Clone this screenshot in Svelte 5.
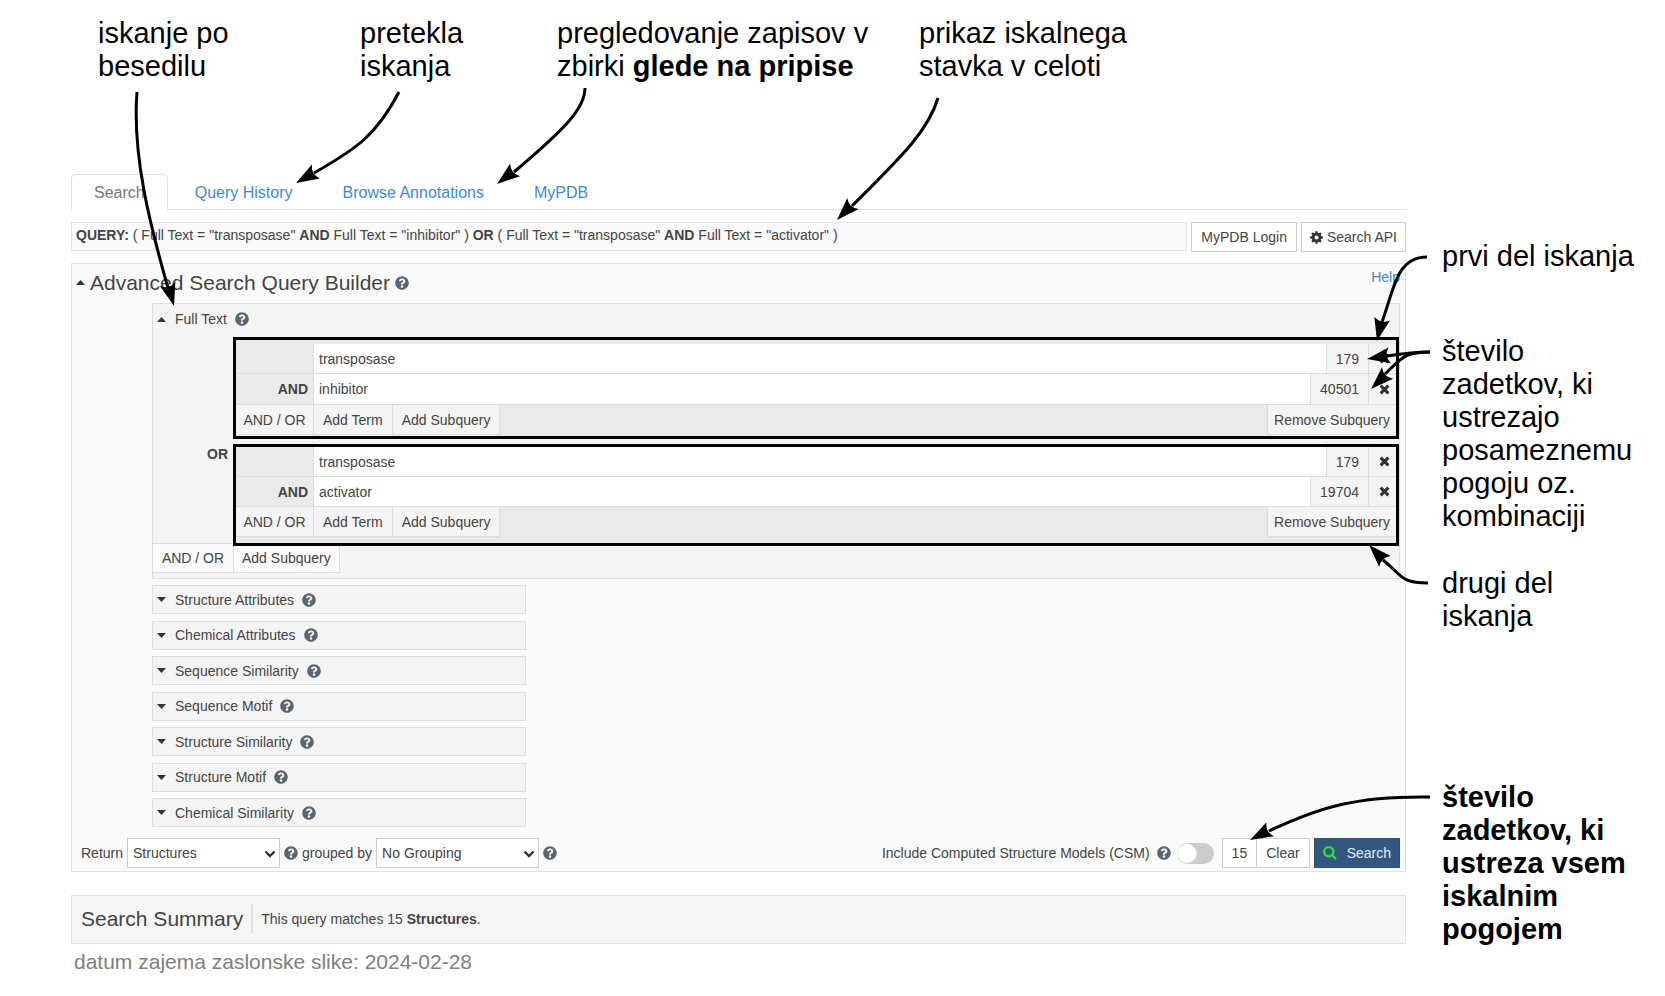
<script>
  const tabs = ['Query History', 'Browse Annotations', 'MyPDB'];
  const groups = [
    { id: 'first', terms: [{ value: 'transposase', count: 179 }, { value: 'inhibitor', count: 40501 }] },
    { id: 'second', terms: [{ value: 'transposase', count: 179 }, { value: 'activator', count: 19704 }] }
  ];
  const sections = [
    'Structure Attributes', 'Chemical Attributes', 'Sequence Similarity', 'Sequence Motif',
    'Structure Similarity', 'Structure Motif', 'Chemical Similarity'
  ];
  const arrows = [
    { line: 'M137 92C132 155 150 225 168 288', x: 174, y: 306, angle: 74 },
    { line: 'M399 92C376 136 356 149 314 173', x: 296, y: 183, angle: 150 },
    { line: 'M585 88C585 108 566 128 514 172', x: 497, y: 184, angle: 142 },
    { line: 'M938 98C928 132 898 160 852 206', x: 837, y: 220, angle: 134 },
    { line: 'M1427 257C1396 257 1394 290 1382 322', x: 1377, y: 341, angle: 103 },
    { line: 'M1430 352C1415 352 1400 354 1387 356', x: 1367, y: 359, angle: 171 },
    { line: 'M1430 352C1404 352 1402 358 1385 374', x: 1371, y: 389, angle: 136 },
    { line: 'M1428 583C1400 583 1402 575 1383 560', x: 1369, y: 545, angle: 226 },
    { line: 'M1430 797C1358 796 1322 806 1269 831', x: 1250, y: 840, angle: 152 }
  ];
</script>

{#snippet help()}
  <svg class="help" viewBox="0 0 512 512" aria-hidden="true"><path d="M504 256c0 136.997-111.043 248-248 248S8 392.997 8 256C8 119.083 119.043 8 256 8s248 111.083 248 248zM262.655 90c-54.497 0-89.255 22.957-116.549 63.758-3.536 5.286-2.353 12.415 2.715 16.258l34.699 26.31c5.205 3.947 12.621 3.008 16.665-2.122 17.864-22.658 30.113-35.797 57.303-35.797 20.429 0 45.698 13.148 45.698 32.958 0 14.976-12.363 22.667-32.534 33.976C247.128 238.528 216 254.941 216 296v4c0 6.627 5.373 12 12 12h56c6.627 0 12-5.373 12-12v-1.333c0-28.462 83.186-29.647 83.186-106.667 0-58.002-60.165-102-116.531-102zM256 338c-25.365 0-46 20.635-46 46 0 25.364 20.635 46 46 46s46-20.636 46-46c0-25.364-20.635-46-46-46z" /></svg>
{/snippet}

{#snippet caret(up)}
  <svg class="caret" viewBox="0 0 9 5" aria-hidden="true"><path d={up ? 'M0 5L4.5 0L9 5Z' : 'M0 0L4.5 5L9 0Z'} /></svg>
{/snippet}

{#snippet chevron()}
  <svg class="chevron" viewBox="0 0 12 8" aria-hidden="true"><path d="M1.5 1.5L6 6L10.5 1.5" /></svg>
{/snippet}

<div class="page">
  <header class="notes-top">
    <p>iskanje po<br />besedilu</p>
    <p>pretekla<br />iskanja</p>
    <p>pregledovanje zapisov v<br />zbirki <b>glede na pripise</b></p>
    <p>prikaz iskalnega<br />stavka v celoti</p>
  </header>

  <div class="columns">
    <main>
      <nav class="tabs">
        <a class="tab active" href="#search">Search</a>
        {#each tabs as tab}
          <a class="tab" href="#tab">{tab}</a>
        {/each}
      </nav>

      <div class="query-row">
        <div class="query"><b>QUERY:</b> ( Full Text = "transposase" <b>AND</b> Full Text = "inhibitor" ) <b>OR</b> ( Full Text = "transposase" <b>AND</b> Full Text = "activator" )</div>
        <button class="plain">MyPDB Login</button>
        <button class="plain api">
          <svg class="gear" viewBox="0 0 14 14" aria-hidden="true">
            <circle cx="7" cy="7" r="3.7" fill="none" stroke="#333" stroke-width="3" />
            <path d="M7 .2V3M7 11v2.8M.2 7H3M11 7h2.8M2.2 2.2l2 2M9.8 9.8l2 2M11.8 2.2l-2 2M4.2 9.8l-2 2" stroke="#333" stroke-width="2.5" />
          </svg>
          Search API
        </button>
      </div>

      <section class="builder">
        <div class="title-row">
          <button class="title">{@render caret(true)}<span>Advanced Search Query Builder</span>{@render help()}</button>
          <a class="help-link" href="#help">Help</a>
        </div>

        <div class="attributes">
          <div class="fulltext">
            <button class="toggle-head">{@render caret(true)}<span>Full Text</span>{@render help()}</button>
            <div class="groups">
              {#each groups as group, g}
                <b class="joiner">{g ? 'OR' : ''}</b>
                <div class="group {group.id}">
                  {#each group.terms as term, t}
                    <div class="term">
                      <b>{t ? 'AND' : ''}</b>
                      <input type="text" value={term.value} aria-label="Full Text" />
                      <span class="count">{term.count}</span>
                      <button class="remove" aria-label="Remove term">
                        <svg viewBox="0 0 12 12" aria-hidden="true"><path d="M1.8 1.8L10.2 10.2M10.2 1.8L1.8 10.2" /></svg>
                      </button>
                    </div>
                  {/each}
                  <div class="actions">
                    <button class="logic">AND / OR</button>
                    <button>Add Term</button>
                    <button>Add Subquery</button>
                    <button class="last">Remove Subquery</button>
                  </div>
                </div>
              {/each}
            </div>
            <div class="actions outer">
              <button class="logic">AND / OR</button>
              <button>Add Subquery</button>
            </div>
          </div>

          <div class="sections">
            {#each sections as name}
              <button class="toggle-head closed">{@render caret(false)}<span>{name}</span>{@render help()}</button>
            {/each}
          </div>
        </div>

        <div class="run-row">
          <label for="return">Return</label>
          <span class="select"><select id="return"><option>Structures</option></select>{@render chevron()}</span>
          {@render help()}
          <label for="grouping">grouped by</label>
          <span class="select wide"><select id="grouping"><option>No Grouping</option></select>{@render chevron()}</span>
          {@render help()}
          <label class="csm" for="csm">Include Computed Structure Models (CSM)</label>
          {@render help()}
          <input id="csm" class="switch" type="checkbox" />
          <div class="pair">
            <button class="plain">15</button>
            <button class="plain">Clear</button>
          </div>
          <button class="go">
            <svg viewBox="0 0 14 14" aria-hidden="true"><circle cx="5.8" cy="5.8" r="4.6" /><path d="M9.2 9.2L13 13" /></svg>
            Search
          </button>
        </div>
      </section>

      <section class="summary">
        <h2>Search Summary</h2>
        <p>This query matches 15 <b>Structures</b>.</p>
      </section>
      <p class="caption">datum zajema zaslonske slike: 2024-02-28</p>
    </main>

    <aside class="notes-side">
      <p class="part-one">prvi del iskanja</p>
      <p class="hits">število<br />zadetkov, ki<br />ustrezajo<br />posameznemu<br />pogoju oz.<br />kombinaciji</p>
      <p class="part-two">drugi del<br />iskanja</p>
      <p><b>število<br />zadetkov, ki<br />ustreza vsem<br />iskalnim<br />pogojem</b></p>
    </aside>
  </div>

  <svg class="arrows" viewBox="0 0 1665 996" preserveAspectRatio="none" aria-hidden="true">
    {#each arrows as a}
      <path class="line" d={a.line} />
      <path class="head" d="M0 0L-23 -8Q-17 0 -23 8Z" transform="translate({a.x} {a.y}) rotate({a.angle})" />
    {/each}
  </svg>
</div>

<style>
  :global(body) { background: #fff; }
  .page, .page * { box-sizing: border-box; }
  .page {
    position: relative;
    padding-top: 17px;
    font: 14px/20px "Liberation Sans", Arial, sans-serif;
    color: #444;
  }
  p, h2 { margin: 0; }
  button, input, select { font: inherit; color: inherit; margin: 0; }
  button { cursor: pointer; white-space: nowrap; }
  a { color: #428bca; text-decoration: none; }

  .notes-top, .notes-side { font-size: 29px; line-height: 33px; color: #000; }
  .notes-top {
    display: grid;
    grid-template-columns: 262px 197px 362px 1fr;
    padding-left: 98px;
    height: 157px;
    white-space: nowrap;
  }
  .columns {
    display: grid;
    grid-template-columns: 1fr 224px;
    column-gap: 35px;
    padding-left: 71px;
  }
  main { min-width: 0; padding-bottom: 22px; }
  .notes-side { padding: 66px 0 0 1px; white-space: nowrap; }
  .part-one { margin-bottom: 62px; }
  .hits { margin-bottom: 34px; }
  .part-two { margin-bottom: 148px; }

  .tabs {
    display: flex;
    gap: 4px;
    height: 36px;
    border-bottom: 1px solid #e2e2e2;
    font-size: 16px;
  }
  .tab { height: 36px; padding: 8px 22px; border: 1px solid transparent; }
  .active {
    color: #777;
    background: #fff;
    border-color: #e0e0e0;
    border-bottom-color: #fff;
    border-radius: 5px 5px 0 0;
  }

  .query-row { display: flex; align-items: flex-start; margin: 12px 0; gap: 4px; height: 29px; }
  .query {
    flex: 1;
    height: 29px;
    padding: 2px 4px;
    border: 1px solid #e2e2e2;
    background: #fafafa;
    white-space: nowrap;
  }
  .plain { height: 30px; padding: 0 9px; border: 1px solid #ccc; background: #fff; }
  .api { display: flex; align-items: center; gap: 4px; padding: 0 8px; }
  .gear { width: 13px; height: 13px; }

  .builder { border: 1px solid #e0e0e0; background: #fafafa; padding-bottom: 3px; }
  .title-row { display: flex; justify-content: space-between; padding: 0 5px 0 4px; height: 39px; }
  .title {
    display: flex;
    align-items: center;
    gap: 5px;
    height: 37px;
    padding: 0;
    border: 0;
    background: none;
    font-size: 21px;
  }
  .help-link { padding-top: 3px; }
  .help { flex: none; width: 14px; height: 14px; fill: #5a6672; }
  .caret { flex: none; width: 9px; height: 5px; fill: #333; }

  .attributes { padding: 0 5px 0 80px; }
  .fulltext { border: 1px solid #ddd; background: #f4f4f4; padding-bottom: 5px; }
  .toggle-head { display: flex; align-items: center; border: 0; background: none; padding: 0 4px; height: 30px; }
  .toggle-head span { margin: 0 8px 0 9px; }
  .groups { position: relative; display: grid; grid-template-columns: 80px 1fr; row-gap: 5px; padding-top: 3px; }
  .joiner { text-align: right; padding-right: 5px; }
  .group { border: 3px solid #000; background: #eaeaea; }
  .first { padding: 4px 0 1px; }
  .second { padding-bottom: 6px; }
  .term { display: flex; height: 30px; border-bottom: 1px solid #ddd; }
  .first .term + .term { height: 31px; }
  .term b { width: 78px; padding: 5px 5px 0 0; text-align: right; border-right: 1px solid #ddd; }
  .term input { flex: 1; min-width: 0; padding: 0 5px; border: 0; background: #fff; }
  .count { padding: 5px 9px; border-left: 1px solid #ddd; background: #f4f4f4; }
  .remove { width: 28px; padding: 0 0 0 4px; border: 0; border-left: 1px solid #ddd; background: #f4f4f4; }
  .remove svg { display: block; width: 11px; height: 11px; margin: auto; stroke: #333; stroke-width: 3.4; }
  .actions { display: flex; }
  .actions button {
    height: 30px;
    padding: 0 9px;
    border: solid #ddd;
    border-width: 0 1px 1px 0;
    background: #f4f4f4;
  }
  .actions .logic { width: 78px; padding: 0 5px; }
  .actions .last { margin-left: auto; padding: 0 6px; border-width: 0 0 1px 1px; }
  .outer { margin-top: -3px; }
  .outer .logic { width: 81px; }
  .outer button { padding: 0 8px; background: #fafafa; border-top-width: 1px; }

  .sections {
    display: flex;
    flex-direction: column;
    justify-content: space-between;
    width: 374px;
    height: 242px;
    margin-top: 6px;
  }
  .closed { height: 29px; border: 1px solid #ddd; background: #f4f4f4; }

  .run-row { display: flex; align-items: center; gap: 4px; margin-top: 11px; padding: 0 5px 0 9px; }
  .select { position: relative; display: flex; width: 153px; height: 30px; }
  .wide { width: 163px; }
  select { width: 100%; padding: 0 5px; border: 1px solid #ccc; border-radius: 0; background: #fff; appearance: none; }
  .chevron { position: absolute; right: 4px; top: 12px; width: 12px; height: 8px; fill: none; stroke: #333; stroke-width: 2.4; pointer-events: none; }
  .csm { margin-left: auto; margin-right: 3px; }
  .switch {
    appearance: none;
    width: 37px;
    height: 21px;
    margin: 0 4px 0 2px;
    border-radius: 11px;
    background: radial-gradient(circle at 10px 50%, #fff 9px, #ccc 10px);
  }
  .pair { display: flex; }
  .pair .plain + .plain { border-left: 0; }
  .go {
    display: flex;
    align-items: center;
    gap: 10px;
    height: 30px;
    padding: 0 8px;
    border: 1px solid #2c4f75;
    background: #325880;
    color: #e4eaf0;
  }
  .go svg { width: 14px; height: 14px; fill: none; stroke: #2fe03a; stroke-width: 2.3; }

  .summary {
    display: flex;
    align-items: center;
    gap: 8px;
    height: 49px;
    margin-top: 23px;
    padding: 0 9px 2px;
    border: 1px solid #e0e0e0;
    background: #f6f6f6;
  }
  h2 { padding-right: 8px; border-right: 2px solid #e2e2e2; font-size: 21px; font-weight: 400; line-height: 29px; }
  .caption { margin-top: 6px; padding-left: 3px; font-size: 21px; line-height: 24px; color: #808080; }

  .arrows { position: absolute; inset: 0; width: 100%; height: 100%; pointer-events: none; }
  .line { fill: none; stroke: #000; stroke-width: 3; }
  .head { fill: #000; }
</style>
